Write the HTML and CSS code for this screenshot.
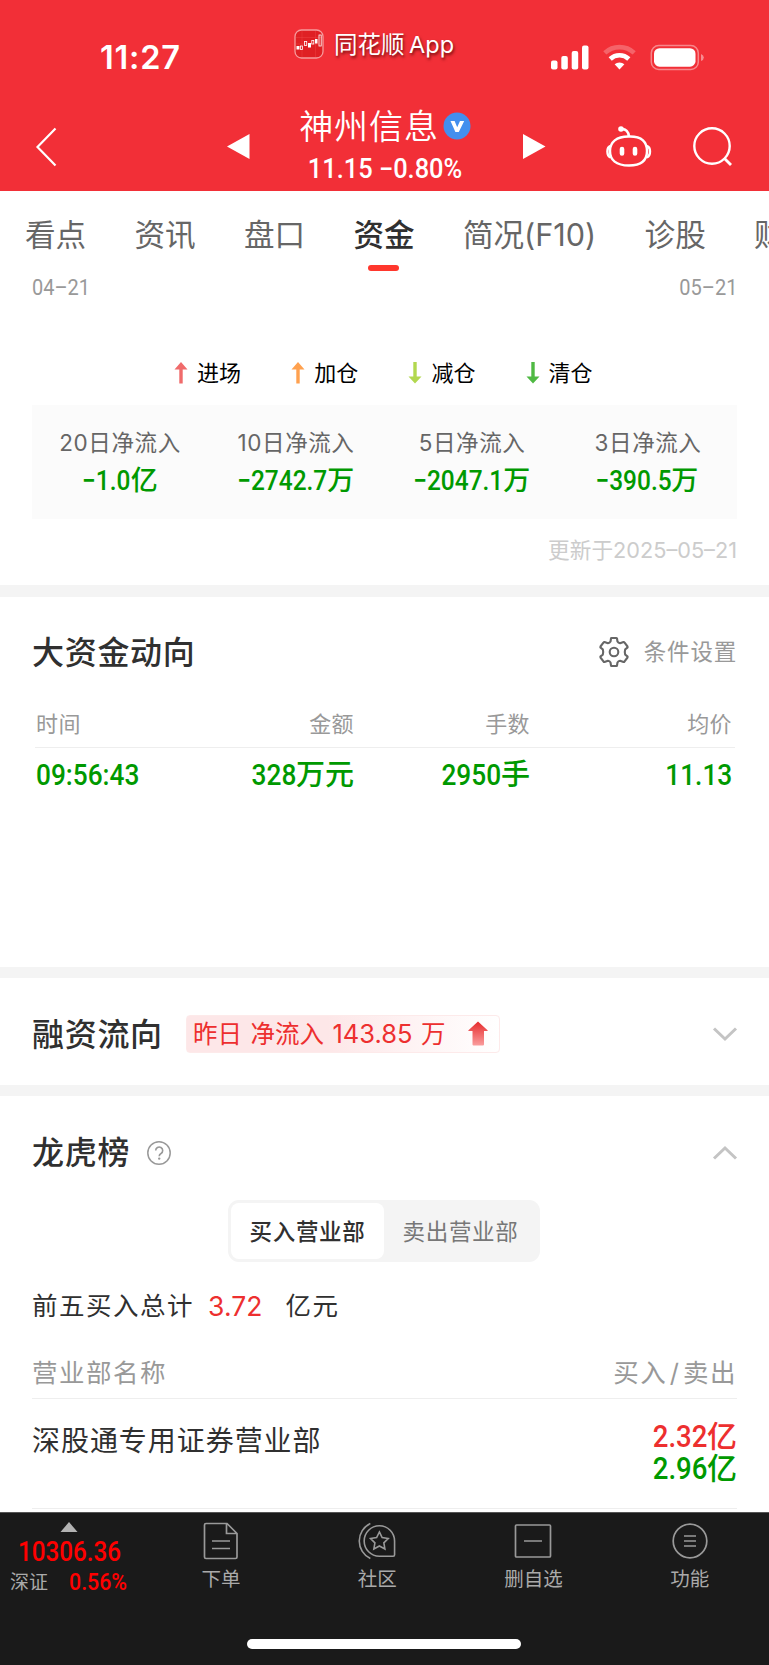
FILE: index.html
```html
<!DOCTYPE html>
<html lang="zh-CN">
<head>
<meta charset="utf-8">
<title>神州信息</title>
<link rel="stylesheet" href="styles.css">
</head>
<body>
<header class="top">
  <div class="status">
    <div class="clock">11:27</div>
    <div class="app">
      <svg width="30" height="30" viewBox="0 0 30 30"><rect x="1" y="1" width="28" height="28" rx="6.5" fill="#df2024" stroke="#f69a9c" stroke-width="1.3"/><path d="M2 8.500H28M2 15H28M8 2V28M21.500 2V28" stroke="#f04a4a" stroke-width=".4"/><g fill="#fff"><rect x="2.500" y="17" width="3" height="3.500"/><rect x="14" y="14" width="3" height="4.500"/><rect x="21" y="10" width="2.500" height="4.500"/></g><g fill="none" stroke="#fff" stroke-width=".8"><rect x="6.500" y="17" width="2" height="3.500"/><rect x="10.500" y="12.500" width="2.200" height="4"/><rect x="17.800" y="11.500" width="2" height="3.500"/><rect x="25" y="6" width="2.200" height="11"/></g></svg>
      <span>同花顺 App</span>
    </div>
    <svg class="signals" width="156" height="28" viewBox="0 0 156 28">
      <g fill="#fff"><rect x="1" y="16.500" width="6.500" height="9" rx="2"/><rect x="11.300" y="12" width="6.500" height="13.500" rx="2"/><rect x="21.700" y="7" width="6.500" height="18.500" rx="2"/><rect x="32" y="1.500" width="6.500" height="24" rx="2"/></g>
      <path d="M54.800 8.900a21.500 21.500 0 0 1 29.400 0" fill="none" stroke="#fff" stroke-opacity=".25" stroke-width="4.600"/>
      <path d="M60.200 15a13.500 13.500 0 0 1 18.600 0" fill="none" stroke="#fff" stroke-width="4.600"/>
      <path d="M64.600 20.300a7.200 7.200 0 0 1 9.800 0L69.500 25.500Z" fill="#fff"/>
      <rect x="101.300" y="1.500" width="47" height="24" rx="7.500" fill="none" stroke="#fff" stroke-opacity=".42" stroke-width="1.500"/>
      <rect x="104" y="4.200" width="41.500" height="18.500" rx="5.500" fill="#fff"/>
      <path d="M151 10q2.800 1 2.800 3.500t-2.800 3.500Z" fill="#fff" fill-opacity=".45"/>
    </svg>
  </div>
  <div class="nav">
    <svg class="back" width="24" height="42" viewBox="0 0 24 42"><path d="M20.500 2.500L2.500 21 20.500 39.500" fill="none" stroke="#fff" stroke-width="2.200"/></svg>
    <svg class="prev" width="23" height="26" viewBox="0 0 23 26"><path d="M0 12.500L22.500 0V25Z" fill="#fff"/></svg>
    <div class="stock">
      <div class="name">神州信息<svg width="28" height="28" viewBox="0 0 28 28"><circle cx="14" cy="14" r="13.500" fill="#438fee"/><path d="M7.500 9H11.600L14.200 15.300 17 9H21.200L15.800 20H12.400Z" fill="#fff"/></svg></div>
      <div class="quote"><span>11.15</span> <span>−0.80%</span></div>
    </div>
    <svg class="next" width="23" height="26" viewBox="0 0 23 26"><path d="M22.500 12.500L0 0V25Z" fill="#fff"/></svg>
    <svg class="robot" width="48" height="44" viewBox="0 0 48 44" fill="none" stroke="#fff" stroke-width="2.400"><path d="M23.500 11.500H25C37 11.500 42 17 42 26S37 40.500 24 40.500 5 35 5 26 11.500 11.500 23.500 11.500Z"/><path d="M5.500 21Q2.400 22 2.400 26.500t3.100 6M41.800 21Q45 22 45 26.500t-3.200 6"/><path d="M16 4Q23 3.500 24 11.500" stroke-width="2.600"/><circle cx="16" cy="4" r="2.800" fill="#fff" stroke="none"/><path d="M17 24V28.500M30 24V28.500" stroke-width="4.600" stroke-linecap="round"/></svg>
    <svg class="search" width="42" height="42" viewBox="0 0 42 42" fill="none" stroke="#fff" stroke-width="2.400"><circle cx="20" cy="20" r="17.700"/><path d="M32 32L39 39" stroke-width="2.800"/></svg>
  </div>
</header>

<nav class="tabs">
  <span>看点</span><span>资讯</span><span>盘口</span><span class="on">资金</span><span>简况(F10)</span><span>诊股</span><span>财务</span>
</nav>

<section class="flow">
  <div class="dates"><span>04–21</span><span class="end">05–21</span></div>
  <div class="legend">
    <div><svg class="arrow red" width="14" height="22" viewBox="0 0 14 22"><path d="M7 0L13.500 7.500H8.700V21.500H5.300V7.500H.5Z"/></svg>进场</div>
    <div><svg class="arrow orange" width="14" height="22" viewBox="0 0 14 22"><path d="M7 0L13.500 7.500H8.700V21.500H5.300V7.500H.5Z"/></svg>加仓</div>
    <div><svg class="arrow lime" width="14" height="22" viewBox="0 0 14 22"><path d="M7 21.500L13.500 14.500H8.700V0H5.300V14.500H.5Z"/></svg>减仓</div>
    <div><svg class="arrow grass" width="14" height="22" viewBox="0 0 14 22"><path d="M7 21.500L13.500 14.500H8.700V0H5.300V14.500H.5Z"/></svg>清仓</div>
  </div>
  <div class="panel">
    <div><p>20日净流入</p><b><i class="din short">−1.0</i>亿</b></div>
    <div><p>10日净流入</p><b><i class="din">−2742.7</i>万</b></div>
    <div><p>5日净流入</p><b><i class="din">−2047.1</i>万</b></div>
    <div><p>3日净流入</p><b><i class="din">−390.5</i>万</b></div>
  </div>
  <p class="updated">更新于2025–05–21</p>
</section>

<section class="big">
  <div class="head">
    <h2>大资金动向</h2>
    <div class="setting"><svg width="32" height="32" viewBox="0 0 32 32" fill="none" stroke="#666" stroke-width="2.100" stroke-linejoin="round"><path d="M13 2.500Q13 2 13.600 2H18.400Q19 2 19 2.500L19.500 5.600Q20.300 7 22 7.200L25.500 6Q26.100 5.900 26.400 6.400L29.500 10.500Q29.900 11.200 29.400 11.700L27.200 13.300Q26.400 16 27.200 18.700L29.400 20.300Q29.900 20.800 29.500 21.500L26.400 25.600Q26.100 26.100 25.500 26L22 24.800Q20.300 25 19.500 26.400L19 29.500Q19 30 18.400 30H13.600Q13 30 13 29.500L12.500 26.400Q11.700 25 10 24.800L6.500 26Q5.900 26.100 5.600 25.600L2.500 21.500Q2.100 20.800 2.600 20.300L4.800 18.700Q5.600 16 4.800 13.300L2.600 11.700Q2.100 11.200 2.500 10.500L5.600 6.400Q5.900 5.900 6.500 6L10 7.200Q11.700 7 12.500 5.600Z"/><circle cx="16" cy="16" r="4.300"/></svg><span>条件设置</span></div>
  </div>
  <div class="trades">
    <div class="row labels"><span>时间</span><span>金额</span><span>手数</span><span>均价</span></div>
    <div class="row values"><span><i class="din left">09:56:43</i></span><span><i class="din">328</i>万元</span><span><i class="din">2950</i>手</span><span><i class="din">11.13</i></span></div>
  </div>
</section>

<section class="margin">
  <h2>融资流向</h2>
  <div class="tag"><span>昨日</span><span>净流入</span><span class="amt">143.85</span><span>万</span><svg width="20" height="25" viewBox="0 0 20 25"><defs><linearGradient id="up" x2="0" y2="1"><stop offset="0" stop-color="#e62a2c"/><stop offset="1" stop-color="#fa9d9d"/></linearGradient></defs><path d="M10 .5L19.800 9.500Q19.500 10 18.800 10H16V23.500Q16 24.500 15 24.500H5.500Q4.500 24.500 4.500 23.500V10H1.200Q.5 10 .2 9.500Z" fill="url(#up)"/></svg></div>
  <svg class="fold" width="26" height="16" viewBox="0 0 26 16"><path d="M2 2.500L13 13 24 2.500" fill="none" stroke="#c4c4c4" stroke-width="3"/></svg>
</section>

<section class="board">
  <div class="head">
    <h2>龙虎榜</h2>
    <svg class="help" width="26" height="26" viewBox="0 0 26 26"><circle cx="13" cy="13" r="11.200" fill="none" stroke="#999" stroke-width="1.500"/><path d="M9.700 10.500a3.500 3.500 0 1 1 5.300 3Q13.200 14.500 13.200 16.300" fill="none" stroke="#999" stroke-width="1.600"/><circle cx="13.200" cy="18.600" r="1.200" fill="#999"/></svg>
    <svg class="fold" width="26" height="16" viewBox="0 0 26 16"><path d="M2 13.500L13 3 24 13.500" fill="none" stroke="#c4c4c4" stroke-width="3"/></svg>
  </div>
  <div class="segment"><span class="on">买入营业部</span><span>卖出营业部</span></div>
  <div class="total"><span>前五买入总计</span><em>3.72</em><span>亿元</span></div>
  <div class="cols"><span>营业部名称</span><span class="bs">买入<i>/</i>卖出</span></div>
  <div class="item">
    <span>深股通专用证券营业部</span>
    <div class="amounts"><div class="buy"><i class="din">2.32</i>亿</div><div class="sell"><i class="din">2.96</i>亿</div></div>
  </div>
</section>

<footer class="bar">
  <div class="items">
    <div class="index">
      <svg width="18" height="10" viewBox="0 0 18 10"><path d="M9 0L17.500 10H.5Z" fill="#b3b3b3"/></svg>
      <div class="point"><i class="din left">10306.36</i></div>
      <div class="change"><span>深证</span><i class="din left">0.56%</i></div>
    </div>
    <div class="item-tab"><svg width="36" height="38" viewBox="0 0 36 38"><path d="M3 1.500H24L34 11.500V35Q34 36.500 32.500 36.500H3Q1.500 36.500 1.500 35V3Q1.500 1.500 3 1.500ZM23.500 1.500V11.500H34M9 19H27M9 26.500H27"/></svg>下单</div>
    <div class="item-tab"><svg width="42" height="40" viewBox="0 0 42 40"><path d="M23.500 4A16 16 0 0 0 23.500 36H38Q39.500 36 39.500 34.500V20A16 16 0 0 0 23.500 4ZM14 1.500A20.500 20.500 0 0 0 14 38.500M23.500 10.500L26.400 16.400 32.800 17.400 28.200 22 29.300 28.400 23.500 25.300 17.700 28.400 18.800 22 14.200 17.400 20.600 16.400Z"/></svg>社区</div>
    <div class="item-tab"><svg width="38" height="38" viewBox="0 0 38 38"><path d="M2.500 3H35.500Q36.500 3 36.500 4V34Q36.500 35 35.500 35H2.500Q1.500 35 1.500 34V4Q1.500 3 2.500 3ZM10 19H28"/></svg>删自选</div>
    <div class="item-tab"><svg width="38" height="38" viewBox="0 0 38 38"><circle cx="19" cy="19" r="16.800"/><path d="M13 14H25M13 19H25M13 24H25"/></svg>功能</div>
  </div>
  <div class="home"></div>
</footer>
</body>
</html>
```

FILE: styles.css
```css
* { box-sizing: border-box; }
body, p, h2 { margin: 0; }
body { width: 769px; height: 1665px; overflow: hidden; background: #fff; color: #303030; font-family: Inter, "Noto Sans CJK SC", sans-serif; display: flex; flex-direction: column; }
svg { display: block; flex: none; }
span, div, p, h2 { white-space: nowrap; }
i, em { font-style: normal; }

/* condensed figures */
.din { display: inline-block; font-family: Roboto, sans-serif; font-weight: 500; transform: scaleX(.89); transform-origin: right center; }
.din.left { transform-origin: left center; }

.top { height: 191px; background: #f22f37; color: #fff; flex: none; }
.status { display: flex; height: 98px; padding-left: 100px; }
.clock { width: 194px; padding-top: 38px; font-size: 32.500px; line-height: 40px; font-weight: 600; letter-spacing: .8px; }
.app { width: 256px; display: flex; gap: 10px; padding-top: 29px; font-size: 23.5px; line-height: 32px; text-shadow: 1px 2px 3px rgba(70, 0, 0, .75); word-spacing: -2px; }
.signals { margin-top: 44px; }
.nav { display: flex; height: 93px; }
.back { margin: 28px 0 0 35px; }
.prev { margin: 36px 0 0 168px; }
.stock { width: 273px; text-align: center; padding-right: 3px; }
.name { display: flex; align-items: center; justify-content: center; gap: 4px; height: 56px; font-size: 34px; letter-spacing: .9px; font-weight: 350; line-height: 56px; padding-top: 2px; }
.name svg { margin-top: -2px; }
.quote { font: 500 27px/30px Roboto, sans-serif; transform: scaleX(.94); }
.next { margin-top: 36px; }
.robot { margin: 27px 0 0 59px; }
.search { margin: 28px 0 0 39px; }

.tabs { display: flex; height: 85px; flex: none; padding: 17px 0 0 25px; gap: 48.300px; font-size: 30.600px; line-height: 54px; color: #666; overflow: hidden; }
.tabs .on { position: relative; color: #303030; font-weight: 500; }
.tabs .on::after { content: ""; position: absolute; left: 15px; top: 57px; width: 31px; height: 6px; border-radius: 3px; background: #ff372d; }

.flow { height: 321px; flex: none; border-bottom: 12px solid #f4f4f4; padding: 0 32px; }
.dates { display: flex; justify-content: space-between; height: 78px; font: 400 21.500px/23px Roboto, sans-serif; color: #999; }
.dates span { transform: scaleX(.93); transform-origin: left; }
.dates .end { transform-origin: right; }
.legend { display: flex; height: 51px; padding-left: 142px; color: #000; font-size: 22px; line-height: 38px; }
.legend div { display: flex; width: 117.200px; gap: 9px; }
.arrow { margin-top: 8px; }
.red { fill: #f06b6b; } .orange { fill: #ffa14f; } .lime { fill: #b2d84f; } .grass { fill: #4fb943; }
.panel { display: grid; grid-template-columns: repeat(4, 1fr); height: 114px; padding: 19px 1px 0 0; background: #fbfbfb; text-align: center; }
.panel p { font-size: 22.500px; line-height: 37px; letter-spacing: .6px; color: #666; }
.panel b { display: block; font-size: 27px; line-height: 40px; font-weight: 500; color: #090; }
.panel .din { font-size: 27.500px; margin-left: -12px; }
.panel .short { margin-left: -6px; }
.updated { text-align: right; font-size: 21.700px; line-height: 36px; padding-top: 13px; color: #ccc; }

.head { display: flex; align-items: center; }
h2 { font-size: 32px; font-weight: 500; letter-spacing: .7px; line-height: 48px; }
.big { height: 381px; flex: none; border-bottom: 11px solid #f4f4f4; padding: 32px 32px 0; }
.big .head { justify-content: space-between; height: 48px; }
.setting { display: flex; align-items: center; gap: 14px; font-size: 22.500px; letter-spacing: .8px; line-height: 40px; color: #999; margin-top: -2px; }
.setting span { margin-top: -1px; }
.trades { padding: 26px 2px 0 3px; }
.row { display: grid; grid-template-columns: 142px 176px 176px 202px; text-align: right; }
.row span:first-child { text-align: left; }
.labels { height: 45px; line-height: 42px; font-size: 22px; letter-spacing: .4px; color: #999; border-bottom: 1px solid #eee; padding-left: 1px; }
.values { padding: 7px 0 0 1px; line-height: 40px; font-size: 29px; font-weight: 500; color: #090; }
.values .din { font-size: 29.500px; }

.margin { height: 118px; flex: none; border-bottom: 11px solid #f4f4f4; padding: 0 32px; display: flex; align-items: center; }
.margin h2 { width: 154px; padding-top: 6px; }
.tag { display: flex; align-items: center; width: 314px; height: 38px; margin-top: 4px; padding-left: 6px; border: 1px solid #fdeaea; border-radius: 4px; background: linear-gradient(90deg, #fde7e8 45%, #fff); color: #ed2f2f; font-size: 24.500px; gap: 8.500px; line-height: 36px; }
.tag .amt { font-size: 25.500px; }
.tag svg { margin-left: 14px; }
.fold { margin-left: auto; margin-right: -1px; }
.margin .fold { margin-top: 4px; }

.board { height: 416px; flex: none; padding: 33px 32px 0; }
.board .head { height: 48px; }
.help { margin-left: 16px; }
.segment { display: grid; grid-template-columns: 153px 153px; width: 312px; height: 62px; margin: 23px auto 0 196px; padding: 3px; background: #f4f4f4; border-radius: 11px; text-align: center; font-size: 22.500px; letter-spacing: .7px; line-height: 58px; color: #777; }
.segment .on { height: 56px; background: #fff; color: #303030; font-weight: 500; border-radius: 8px; }
.total { display: flex; height: 60px; padding-top: 25px; font-size: 25.500px; line-height: 38px; letter-spacing: 1.500px; }
.total em { color: #ed2f2f; margin: 0 23px 0 14px; font-size: 26.500px; letter-spacing: .1px; }
.cols { display: flex; justify-content: space-between; height: 77px; padding-top: 32px; border-bottom: 1px solid #eee; font-size: 25.500px; line-height: 38px; letter-spacing: 1.500px; color: #999; }
.cols i { margin: 0 2.500px; }
.item { display: flex; justify-content: space-between; height: 110px; padding-top: 21px; border-bottom: 1px solid #eee; font-size: 28px; line-height: 42px; letter-spacing: .95px; }
.amounts { letter-spacing: 0; line-height: 31px; padding-top: 1px; font-size: 30px; font-weight: 500; text-align: right; }
.amounts .din { font-size: 31px; }
.buy { color: #ed2f2f; height: 32px; } .sell { color: #090; height: 31px; }

.bar { height: 153px; flex: none; background: #1a1a1a; border-top: 1px solid #555; color: #aaa; }
.items { display: flex; height: 126px; font-size: 19.500px; }
.index { width: 143px; padding-top: 9px; flex: none; }
.index > svg { margin-left: 60px; }
.point { height: 37px; margin-left: 18px; font-size: 28px; line-height: 39px; color: #f00; }
.point .din { transform: scaleX(.865); }
.change { display: flex; gap: 21px; margin-left: 10px; font-size: 19px; line-height: 28px; height: 28px; }
.change .din { font-size: 24px; line-height: 26px; color: #f00; }
.item-tab { width: 156.200px; flex: none; padding-top: 9px; display: flex; flex-direction: column; align-items: center; line-height: 38px; }
.item-tab svg { height: 38px; fill: none; stroke: #999; stroke-width: 1.700; }
.home { width: 274px; height: 10px; border-radius: 5px; background: #fff; margin-left: 247px; }
```
